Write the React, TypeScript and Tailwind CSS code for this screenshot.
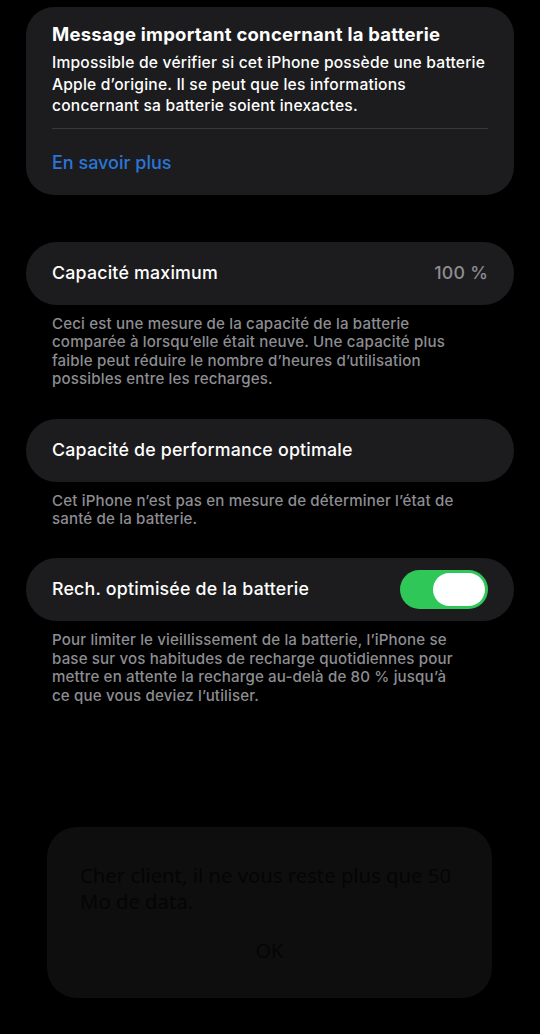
import React from "react";

const font = { fontFamily: "Inter, 'Noto Sans', sans-serif" } as const;

function Footer({ children }: { children: React.ReactNode }) {
  return (
    <p className="pl-[52px] pr-[20px] pt-[10px] text-[15.1px] leading-[18.6px] font-medium text-[#8d8d92] tracking-[0.15px] whitespace-nowrap">
      {children}
    </p>
  );
}

function Card({ children }: { children: React.ReactNode }) {
  return (
    <div className="px-[26px]">
      <div className="h-[63px] rounded-[31px] bg-[#1c1c1e] px-[26px] flex items-center justify-between">
        {children}
      </div>
    </div>
  );
}

export default function App() {
  return (
    <div className="w-[540px] h-[1034px] bg-black overflow-hidden relative" style={font}>
      <div className="pt-[7px] px-[26px]">
        <div className="rounded-[28px] bg-[#1c1c1e] pt-[15px] pb-[20px] px-[26px]">
          <h1 className="text-[18.5px] leading-[24px] font-bold text-white tracking-[0.25px] whitespace-nowrap">
            Message important concernant la batterie
          </h1>
          <p className="mt-[6px] text-[15.6px] leading-[21.5px] font-medium text-white tracking-[0.2px] whitespace-nowrap">
            Impossible de vérifier si cet iPhone possède une batterie
            <br />
            Apple d’origine. Il se peut que les informations
            <br />
            concernant sa batterie soient inexactes.
          </p>
          <div className="mt-[11px] h-px bg-[#38383a]" />
          <div className="mt-[22px] text-[18px] leading-[24px] text-[#2a76d8] font-medium">En savoir plus</div>
        </div>
      </div>

      <div className="mt-[47px]">
        <Card>
          <span className="text-[17.8px] font-medium tracking-[0.2px] text-white">Capacité maximum</span>
          <span className="text-[17.8px] font-medium tracking-[0.2px] text-[#8d8d92]">100 %</span>
        </Card>
      </div>
      <Footer>
        Ceci est une mesure de la capacité de la batterie
        <br />
        comparée à lorsqu’elle était neuve. Une capacité plus
        <br />
        faible peut réduire le nombre d’heures d’utilisation
        <br />
        possibles entre les recharges.
      </Footer>

      <div className="mt-[30px]">
        <Card>
          <span className="text-[17.8px] font-medium tracking-[0.2px] text-white">Capacité de performance optimale</span>
        </Card>
      </div>
      <Footer>
        Cet iPhone n’est pas en mesure de déterminer l’état de
        <br />
        santé de la batterie.
      </Footer>

      <div className="mt-[29px]">
        <Card>
          <span className="text-[17.8px] font-medium tracking-[0.2px] text-white">Rech. optimisée de la batterie</span>
          <div className="w-[88px] h-[39px] rounded-full bg-[#30c759] p-[3px] flex justify-end">
            <div className="w-[52px] h-[33px] rounded-full bg-white" />
          </div>
        </Card>
      </div>
      <Footer>
        Pour limiter le vieillissement de la batterie, l’iPhone se
        <br />
        base sur vos habitudes de recharge quotidiennes pour
        <br />
        mettre en attente la recharge au-delà de 80 % jusqu’à
        <br />
        ce que vous deviez l’utiliser.
      </Footer>

      <div className="absolute left-[47px] top-[827px] w-[445px] h-[171px] rounded-[30px] bg-[#0e0e0e] px-[33px] pt-[35px]">
        <p
          className="text-[20.3px] leading-[26px] text-[#050505] whitespace-nowrap"
          style={{ fontFamily: "'Noto Sans', sans-serif" }}
        >
          Cher client, il ne vous reste plus que 50
          <br />
          Mo de data.
        </p>
        <div
          className="mt-[22px] text-center text-[20px] text-[#050505]"
          style={{ fontFamily: "'Noto Sans', sans-serif" }}
        >
          OK
        </div>
      </div>
    </div>
  );
}
